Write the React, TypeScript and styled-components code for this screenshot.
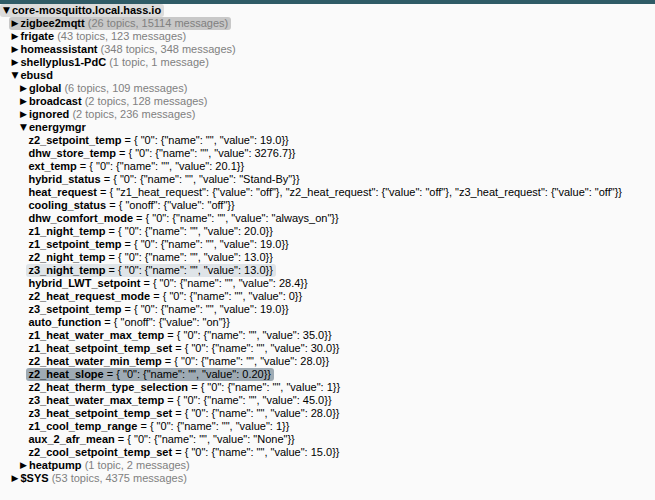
import styled, { createGlobalStyle } from "styled-components";

const Global = createGlobalStyle`
	body {
		margin: 0;
		background: #fafafa;
		font-family: "Liberation Sans", Arial, sans-serif;
	}
`;

const TopBar = styled.div`
	height: 4px;
	background: #2f5b66;
`;

const Tree = styled.div`
	font-size: 11px;
	line-height: 13px;
	color: #000;
`;

const Row = styled.div<{ $level: number }>`
	padding-left: ${(p) => 3 + p.$level * 8.5}px;
	white-space: nowrap;
	height: 13px;
`;

const Label = styled.span<{ $hl?: "root" | "sel" | "hover" | "active" }>`
	display: inline-block;
	padding-right: 3px;
	border-radius: 3px;
	background: ${(p) =>
		p.$hl === "root"
			? "#dcdcdc"
			: p.$hl === "sel"
			? "#c8c8c8"
			: p.$hl === "hover"
			? "#dfe4e8"
			: p.$hl === "active"
			? "#9eaab3"
			: "transparent"};
	margin-left: ${(p) => (p.$hl ? "-3px" : "0")};
	padding-left: ${(p) => (p.$hl ? "3px" : "0")};
`;

const Arrow = styled.span`
	display: inline-block;
	width: 9px;
	font-size: 9px;
	font-family: "DejaVu Sans", sans-serif;
	vertical-align: top;
`;

const Key = styled.b`
	font-weight: bold;
`;

const Meta = styled.span`
	color: #808080;
`;

type Node = {
	level: number;
	name: string;
	open?: boolean;
	meta?: string;
	value?: string;
	hl?: "root" | "sel" | "hover" | "active";
};

const v = (x: string) => `{ "0": {"name": "", "value": ${x}}}`;

const rows: Node[] = [
	{ level: 0, name: "core-mosquitto.local.hass.io", open: true, hl: "root" },
	{ level: 1, name: "zigbee2mqtt", open: false, meta: "(26 topics, 15114 messages)", hl: "sel" },
	{ level: 1, name: "frigate", open: false, meta: "(43 topics, 123 messages)" },
	{ level: 1, name: "homeassistant", open: false, meta: "(348 topics, 348 messages)" },
	{ level: 1, name: "shellyplus1-PdC", open: false, meta: "(1 topic, 1 message)" },
	{ level: 1, name: "ebusd", open: true },
	{ level: 2, name: "global", open: false, meta: "(6 topics, 109 messages)" },
	{ level: 2, name: "broadcast", open: false, meta: "(2 topics, 128 messages)" },
	{ level: 2, name: "ignored", open: false, meta: "(2 topics, 236 messages)" },
	{ level: 2, name: "energymgr", open: true },
	{ level: 3, name: "z2_setpoint_temp", value: v("19.0") },
	{ level: 3, name: "dhw_store_temp", value: v("3276.7") },
	{ level: 3, name: "ext_temp", value: v("20.1") },
	{ level: 3, name: "hybrid_status", value: v('"Stand-By"') },
	{
		level: 3,
		name: "heat_request",
		value: '{ "z1_heat_request": {"value": "off"}, "z2_heat_request": {"value": "off"}, "z3_heat_request": {"value": "off"}}',
	},
	{ level: 3, name: "cooling_status", value: '{ "onoff": {"value": "off"}}' },
	{ level: 3, name: "dhw_comfort_mode", value: v('"always_on"') },
	{ level: 3, name: "z1_night_temp", value: v("20.0") },
	{ level: 3, name: "z1_setpoint_temp", value: v("19.0") },
	{ level: 3, name: "z2_night_temp", value: v("13.0") },
	{ level: 3, name: "z3_night_temp", value: v("13.0"), hl: "hover" },
	{ level: 3, name: "hybrid_LWT_setpoint", value: v("28.4") },
	{ level: 3, name: "z2_heat_request_mode", value: v("0") },
	{ level: 3, name: "z3_setpoint_temp", value: v("19.0") },
	{ level: 3, name: "auto_function", value: '{ "onoff": {"value": "on"}}' },
	{ level: 3, name: "z1_heat_water_max_temp", value: v("35.0") },
	{ level: 3, name: "z1_heat_setpoint_temp_set", value: v("30.0") },
	{ level: 3, name: "z2_heat_water_min_temp", value: v("28.0") },
	{ level: 3, name: "z2_heat_slope", value: v("0.20"), hl: "active" },
	{ level: 3, name: "z2_heat_therm_type_selection", value: v("1") },
	{ level: 3, name: "z3_heat_water_max_temp", value: v("45.0") },
	{ level: 3, name: "z3_heat_setpoint_temp_set", value: v("28.0") },
	{ level: 3, name: "z1_cool_temp_range", value: v("1") },
	{ level: 3, name: "aux_2_afr_mean", value: v('"None"') },
	{ level: 3, name: "z2_cool_setpoint_temp_set", value: v("15.0") },
	{ level: 2, name: "heatpump", open: false, meta: "(1 topic, 2 messages)" },
	{ level: 1, name: "$SYS", open: false, meta: "(53 topics, 4375 messages)" },
];

const App = () => {
	return (
		<>
			<Global />
			<TopBar />
			<Tree>
				{rows.map((r, i) => (
					<Row key={i} $level={r.level}>
						<Label $hl={r.hl}>
							{r.open !== undefined && <Arrow>{r.open ? "▼" : "▶"}</Arrow>}
							<Key>{r.name}</Key>
							{r.meta && <Meta> {r.meta}</Meta>}
							{r.value && <span> = {r.value}</span>}
						</Label>
					</Row>
				))}
			</Tree>
		</>
	);
};

export default App;
